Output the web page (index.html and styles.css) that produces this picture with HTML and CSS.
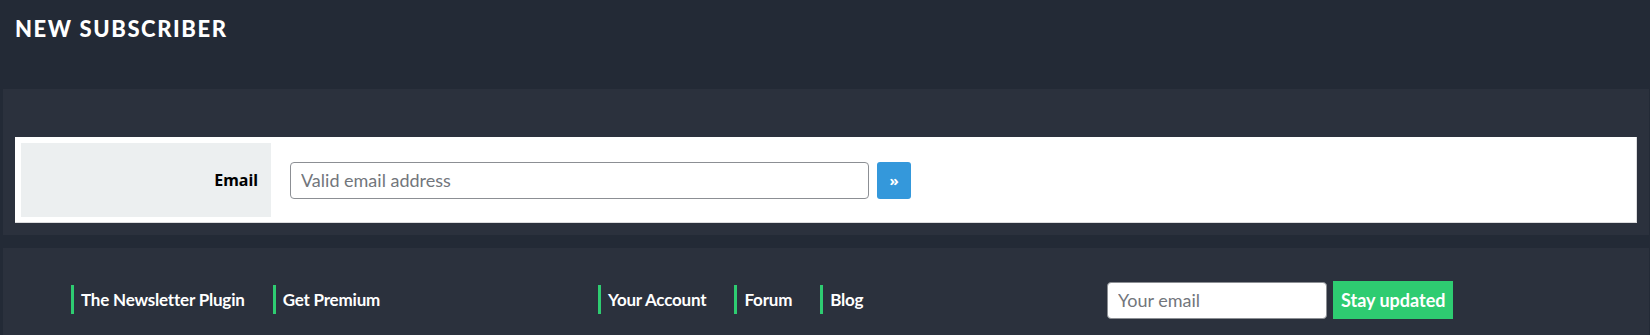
FILE: index.html
```html
<!DOCTYPE html>
<html>
<head>
<meta charset="utf-8">
<link rel="stylesheet" href="styles.css">
</head>
<body>
<header class="page-header">
  <h1 class="page-title">NEW SUBSCRIBER</h1>
</header>
<section class="panel">
  <div class="form-box">
    <div class="form-label">Email</div>
    <div class="form-field">
      <input class="email-input" type="text" placeholder="Valid email address">
      <button class="go-btn">&raquo;</button>
    </div>
  </div>
</section>
<footer class="footer">
  <nav class="links col-a">
    <a class="link">The Newsletter Plugin</a>
    <a class="link">Get Premium</a>
  </nav>
  <nav class="links col-b">
    <a class="link">Your Account</a>
    <a class="link">Forum</a>
    <a class="link">Blog</a>
  </nav>
  <form class="subscribe">
    <input class="footer-input" type="text" placeholder="Your email">
    <button class="stay-btn" type="button">Stay updated</button>
  </form>
</footer>
</body>
</html>
```
FILE: styles.css
```css
html, body {
  margin: 0;
  padding: 0;
  background: #232a36;
  height: 335px;
  overflow: hidden;
}
body {
  font-family: "Lato", "Noto Sans", sans-serif;
}
.page-header {
  padding: 15px 15px 0 15px;
  height: 89px;
  box-sizing: border-box;
}
.page-title {
  margin: 0;
  color: #ffffff;
  font-family: "Lato", sans-serif;
  font-weight: 900;
  font-size: 22px;
  line-height: 28px;
  letter-spacing: 1.6px;
}
.panel {
  margin: 0 1px 0 3px;
  background: #2b313d;
  padding: 48px 12px 12px 12px;
}
.form-box {
  background: #ffffff;
  border-right: 1px solid #dcdcde;
  border-bottom: 1px solid #dcdcde;
  padding: 6px 6px 5px 6px;
  display: flex;
  align-items: stretch;
  height: 74px;
}
.form-label {
  width: 250px;
  box-sizing: border-box;
  background: #eceff0;
  display: flex;
  align-items: center;
  justify-content: flex-end;
  padding-right: 13px;
  font-family: "Noto Sans", sans-serif;
  font-weight: 700;
  font-size: 16px;
  color: #000000;
}
.form-field {
  display: flex;
  align-items: center;
  gap: 8px;
  padding-left: 19px;
}
.email-input {
  width: 579px;
  height: 37px;
  box-sizing: border-box;
  border: 1px solid #8c8f94;
  border-radius: 4px;
  padding: 0 10px;
  font-family: "Lato", sans-serif;
  font-size: 18px;
  color: #333;
  background: #fff;
  outline: none;
}
.email-input::placeholder {
  color: #72767c;
}
.go-btn {
  width: 34px;
  height: 37px;
  border: none;
  border-radius: 3px;
  background: #3498db;
  color: #ffffff;
  font-family: "Noto Sans", sans-serif;
  font-weight: 700;
  font-size: 15px;
  padding: 0;
}
.footer {
  margin: 13px 1px 0 3px;
  background: #2b313d;
  height: 100px;
  box-sizing: border-box;
  padding: 33px 0 0 68px;
  display: flex;
  align-items: flex-start;
}
.links {
  display: flex;
  gap: 28px;
  padding-top: 4px;
}
.col-a {
  width: 527px;
}
.col-b {
  width: 509px;
}
.link {
  display: block;
  border-left: 3px solid #2ecc71;
  padding-left: 7px;
  height: 29px;
  line-height: 30px;
  color: #ffffff;
  font-family: "Lato", sans-serif;
  font-weight: 700;
  font-size: 17px;
  letter-spacing: -0.2px;
  text-decoration: none;
}
.subscribe {
  display: flex;
  align-items: center;
  gap: 6px;
  margin: 0;
}
.footer-input {
  width: 220px;
  height: 37px;
  box-sizing: border-box;
  border: 1px solid #8c8f94;
  border-radius: 4px;
  padding: 0 10px;
  font-family: "Lato", sans-serif;
  font-size: 18px;
  background: #fff;
  outline: none;
}
.footer-input::placeholder {
  color: #72767c;
}
.stay-btn {
  height: 38px;
  border: none;
  border-radius: 0;
  background: #2ecc71;
  color: #ffffff;
  font-family: "Lato", sans-serif;
  font-weight: 700;
  font-size: 18px;
  padding: 0 7px 0 8px;
}
```
